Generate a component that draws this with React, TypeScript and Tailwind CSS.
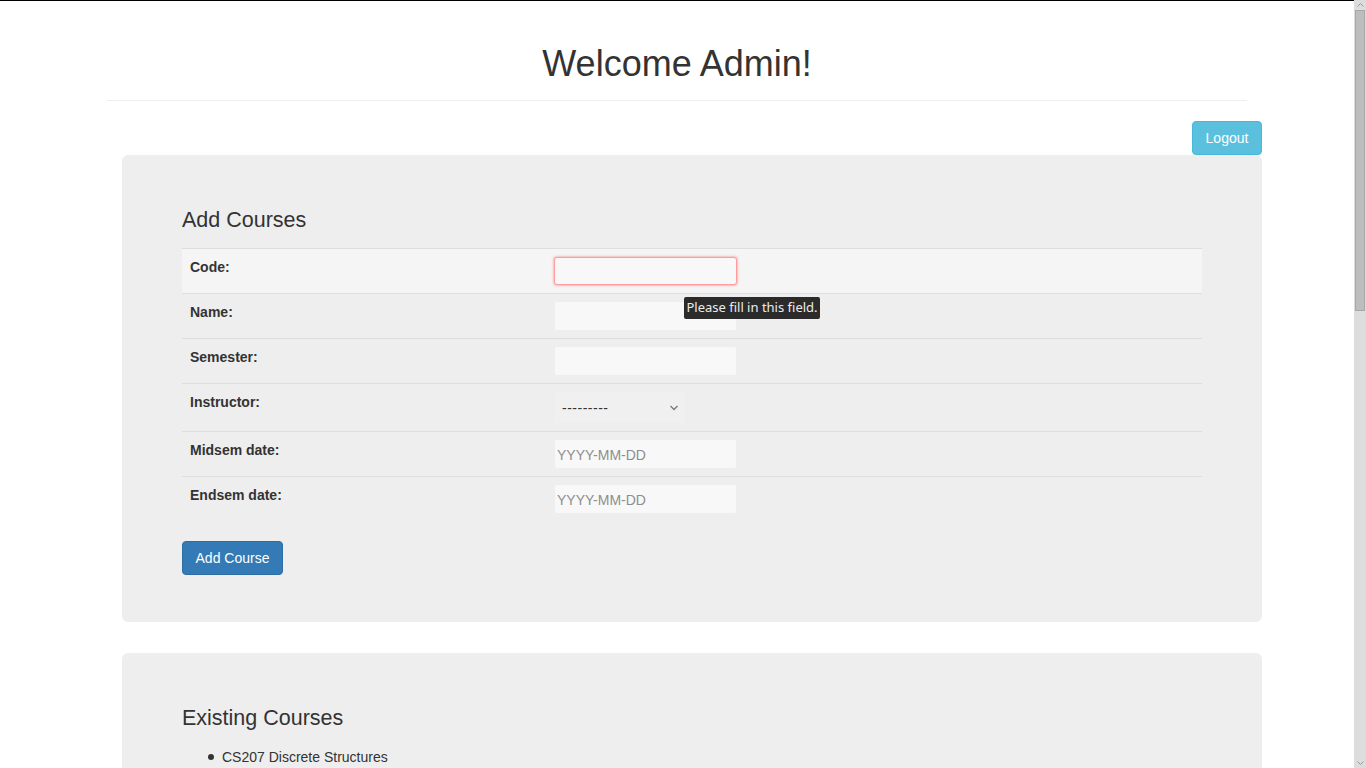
import React from "react";

const rows = [
  { label: "Code:", kind: "code" },
  { label: "Name:", kind: "text" },
  { label: "Semester:", kind: "text" },
  { label: "Instructor:", kind: "select" },
  { label: "Midsem date:", kind: "date" },
  { label: "Endsem date:", kind: "date" },
];

function Field({ kind }: { kind: string }) {
  if (kind === "code") {
    return (
      <div className="relative">
        <div className="h-[28px] w-[183px] -ml-px rounded-[3px] border border-[#ff9c9c] bg-[#f8f8f8] shadow-[0_0_2px_1px_rgba(255,120,120,0.45)]" />
        <div className="absolute left-[129px] top-[40px] z-10 flex h-[22px] w-[136px] items-center justify-center rounded-[2px] bg-[#2b2b2b] text-[13px] text-[#ececec] font-['Noto_Sans',sans-serif] whitespace-nowrap">
          Please fill in this field.
        </div>
      </div>
    );
  }
  if (kind === "text") {
    return <div className="h-[28px] w-[181px] rounded-[2px] bg-[#f8f8f8]" />;
  }
  if (kind === "date") {
    return (
      <div className="flex h-[28px] w-[181px] items-center rounded-[2px] bg-[#f8f8f8] pl-[2px] pt-[2px] text-[14px] text-[#8e8e8e]">
        YYYY-MM-DD
      </div>
    );
  }
  return (
    <div className="flex h-[31px] w-[130px] items-center justify-between rounded-[2px] bg-[#f0f0f0] pl-[7px] pr-[6px] pt-[1px] text-[14px] text-[#333]">
      <span className="tracking-[0.5px]">---------</span>
      <svg width="10" height="6" viewBox="0 0 10 6" className="mb-[1px]">
        <path d="M1.5 1 L5 4.5 L8.5 1" fill="none" stroke="#7a7a7a" strokeWidth="1.3" />
      </svg>
    </div>
  );
}

export default function App() {
  return (
    <div className="flex h-[768px] w-[1366px] overflow-hidden bg-white font-['Liberation_Sans',Arial,sans-serif] text-[#333]">
      <main className="w-[1354px] shrink-0 border-t border-black">
        <h1 className="mt-[43px] text-center text-[36px] leading-[40px] font-normal">Welcome Admin!</h1>
        <div className="mx-[107px] mt-[16px] border-t border-[#eeeeee]" />
        <div className="mt-[20px] flex justify-end pr-[92px]">
          <button className="h-[34px] w-[70px] rounded-[4px] border border-[#46b8da] bg-[#5bc0de] text-[14px] text-white">
            Logout
          </button>
        </div>

        <section className="ml-[122px] w-[1140px] rounded-[6px] bg-[#eeeeee] px-[60px] pt-[52px] pb-[47px]">
          <h3 className="text-[21.5px] leading-[26px] font-normal">Add Courses</h3>
          <div className="mt-[15px]">
            {rows.map((r, i) => (
              <div
                key={r.label}
                className={`flex border-t border-[#dddddd] ${i === 0 ? "bg-[#f5f5f5]" : ""}`}
              >
                <div className="w-[365px] p-[8px] text-[14px] leading-[20px] font-bold">{r.label}</div>
                <div className="py-[8px] pl-[8px]">
                  <Field kind={r.kind} />
                </div>
              </div>
            ))}
          </div>
          <button className="mt-[20px] h-[34px] w-[101px] rounded-[4px] border border-[#2e6da4] bg-[#337ab7] text-[14px] text-white">
            Add Course
          </button>
        </section>

        <section className="mt-[31px] ml-[122px] h-[200px] w-[1140px] rounded-[6px] bg-[#eeeeee] px-[60px] pt-[52px]">
          <h3 className="text-[21.5px] leading-[26px] font-normal">Existing Courses</h3>
          <ul className="mt-[16px] pl-[26px] text-[14px] leading-[20px]">
            <li className="flex items-center">
              <span className="mr-[8px] inline-block h-[6px] w-[6px] rounded-full bg-[#333]" />
              CS207 Discrete Structures
            </li>
          </ul>
        </section>
      </main>

      <div className="flex w-[12px] shrink-0 flex-col bg-[#dddddd]">
        <div className="flex h-[10px] items-center justify-center">
          <svg width="7" height="4" viewBox="0 0 7 4">
            <path d="M0.5 3.5 L3.5 0.5 L6.5 3.5" fill="none" stroke="#999" strokeWidth="1" />
          </svg>
        </div>
        <div className="mx-[1px] h-[301px] border border-[#a8a8a8] bg-[#bdbdbd]" />
        <div className="flex-1" />
        <div className="flex h-[10px] items-center justify-center">
          <svg width="7" height="4" viewBox="0 0 7 4">
            <path d="M0.5 0.5 L3.5 3.5 L6.5 0.5" fill="none" stroke="#999" strokeWidth="1" />
          </svg>
        </div>
      </div>
    </div>
  );
}
